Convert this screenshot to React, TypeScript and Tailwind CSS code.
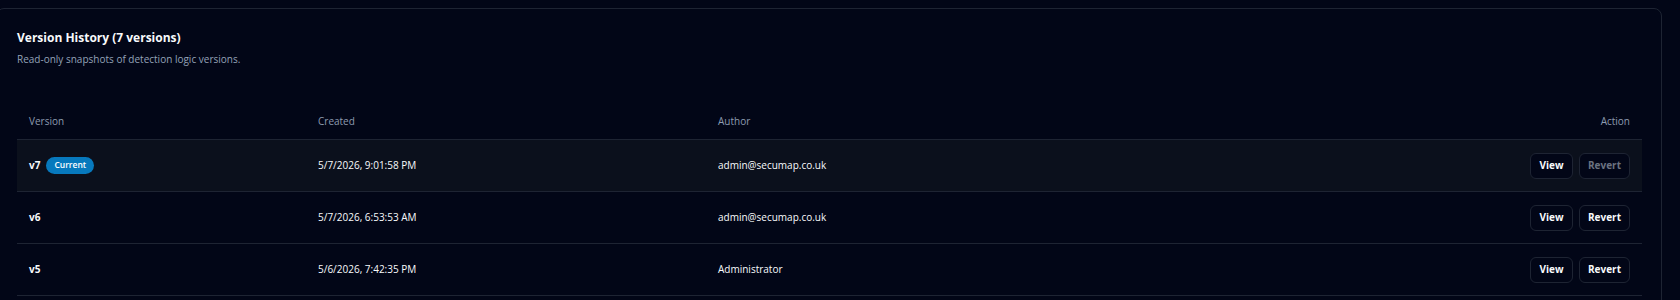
import React from 'react';

interface VersionRow {
  version: string;
  created: string;
  author: string;
  current?: boolean;
}

const versions: VersionRow[] = [
  { version: 'v7', created: '5/7/2026, 9:01:58 PM', author: 'admin@secumap.co.uk', current: true },
  { version: 'v6', created: '5/7/2026, 6:53:53 AM', author: 'admin@secumap.co.uk' },
  { version: 'v5', created: '5/6/2026, 7:42:35 PM', author: 'Administrator' },
];

const cols = 'grid grid-cols-[289px_400px_1fr_auto] items-center';

export default function App() {
  return (
    <div
      className="min-h-screen bg-[#020617] pt-2 pr-[18px] overflow-hidden text-[#f8fafc]"
      style={{ fontFamily: '"Open Sans", "Noto Sans", sans-serif' }}
    >
      <div className="-ml-1 rounded-lg border border-[#1e2433] bg-[#020617] px-5 pt-[19px] pb-6">
        <div className="space-y-[3px]">
          <h3 className="text-[12px] leading-5 font-bold text-[#f8fafc]">
            Version History (7 versions)
          </h3>
          <p className="text-[10px] leading-4 text-[#94a3b8]">
            Read-only snapshots of detection logic versions.
          </p>
        </div>

        <div className="mt-[33px] mr-[-1px]">
          <div className={`${cols} h-10 pt-[3px] border-b border-[#1e2433] text-[10px] font-medium text-[#8d9bb0]`}>
            <div className="px-3">Version</div>
            <div className="px-3">Created</div>
            <div className="px-3">Author</div>
            <div className="px-3 text-right">Action</div>
          </div>

          {versions.map(row => (
            <div
              key={row.version}
              className={`${cols} h-[52px] border-b border-[#1e2433] text-[10px] font-medium ${row.current ? 'bg-[#0b101c]' : ''}`}
            >
              <div className="px-3 flex items-center gap-[6px]">
                <span className="font-bold">{row.version}</span>
                {row.current && (
                  <span className="rounded-full bg-[#0779bd] px-[8px] h-[17px] flex items-center text-[8.5px] font-semibold text-white">
                    Current
                  </span>
                )}
              </div>
              <div className="px-3">{row.created}</div>
              <div className="px-3">{row.author}</div>
              <div className="px-3 flex justify-end gap-[6px]">
                <button className="h-[26px] w-[43px] rounded-md border border-[#1e2433] bg-[#020617] text-[10px] font-bold text-[#f8fafc]">
                  View
                </button>
                <button
                  disabled={row.current}
                  className={`h-[26px] w-[51px] rounded-md border border-[#1e2433] bg-[#020617] text-[10px] font-bold ${row.current ? 'text-[#6b7280]' : 'text-[#f8fafc]'}`}
                >
                  Revert
                </button>
              </div>
            </div>
          ))}
        </div>
      </div>
    </div>
  );
}
